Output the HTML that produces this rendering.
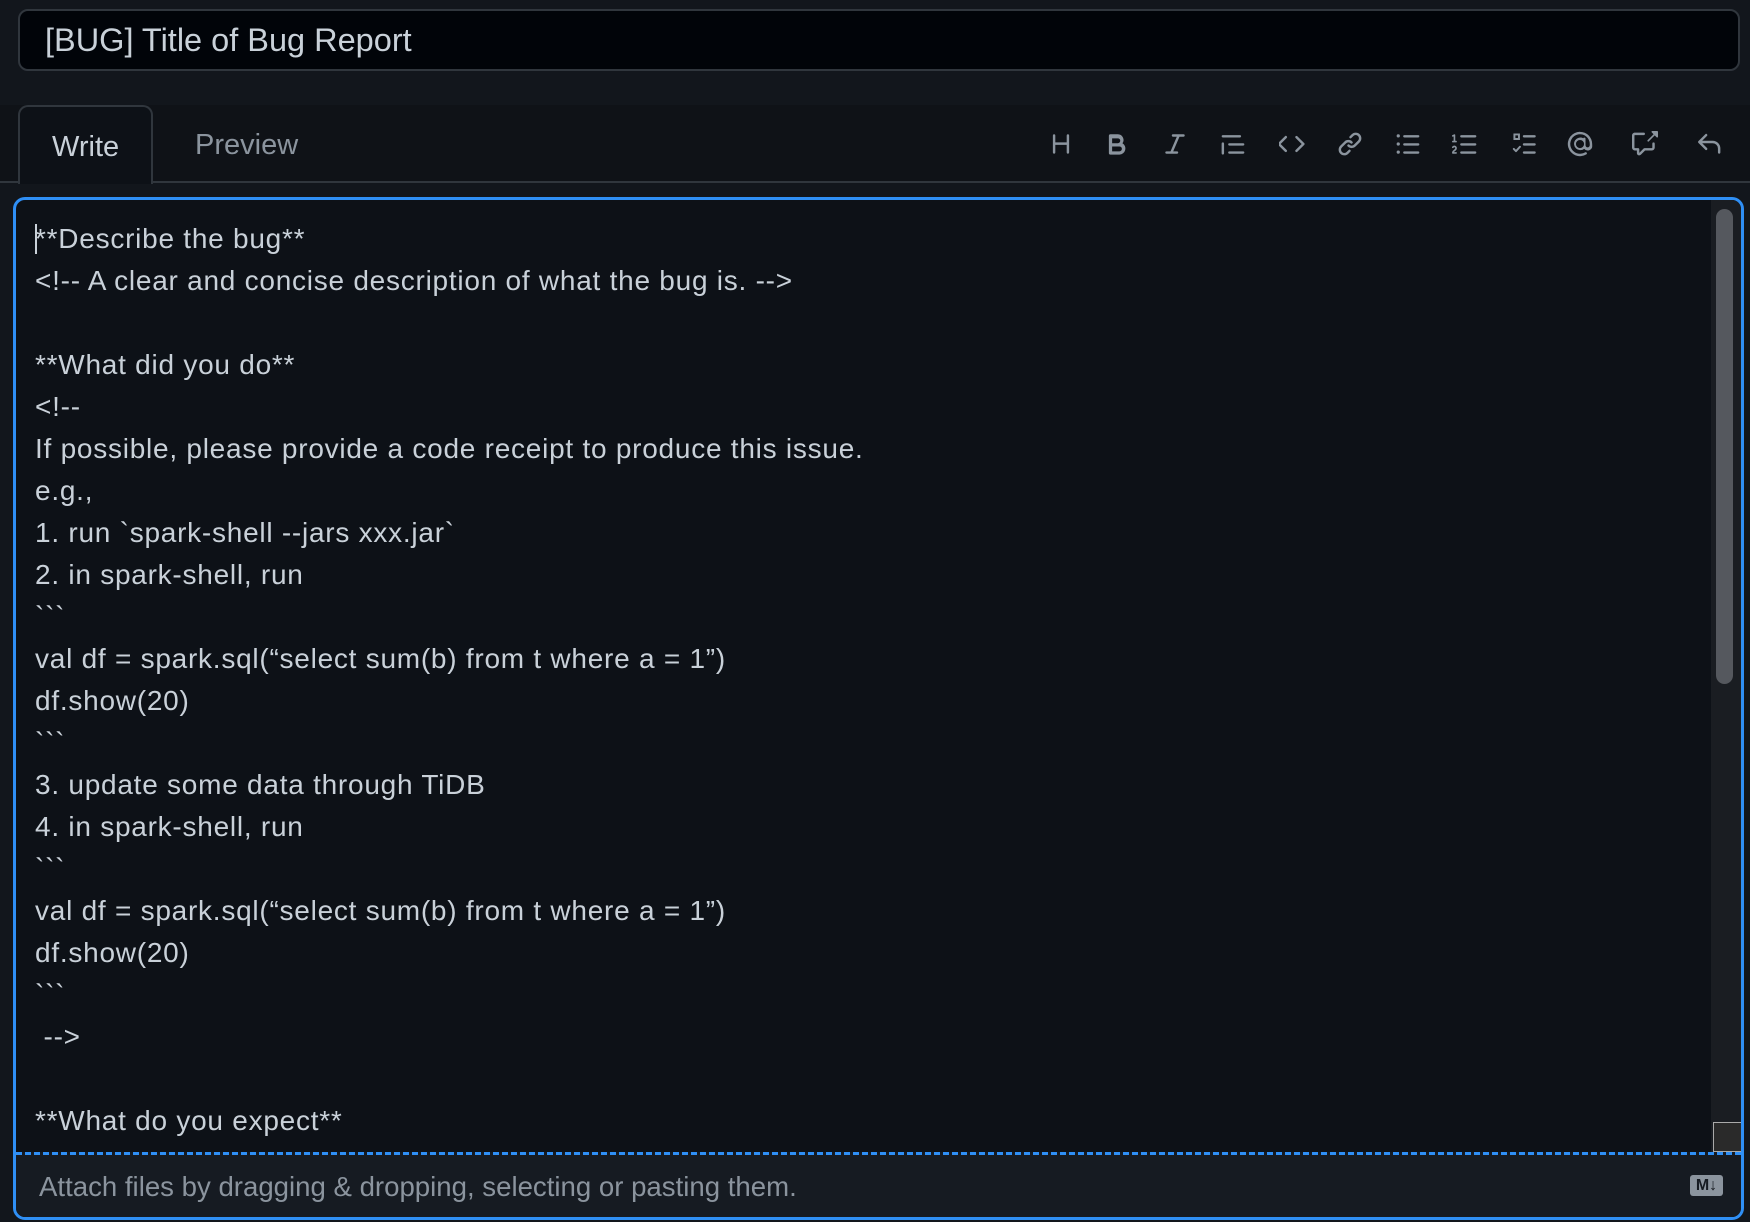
<!DOCTYPE html>
<html><head><meta charset="utf-8"><style>
*{box-sizing:border-box;margin:0;padding:0}
body{width:1750px;height:1222px;background:#12161c;font-family:"Liberation Sans",Arial,sans-serif;position:relative;overflow:hidden;color:#c9d1d9}
.title{position:absolute;left:18px;top:9px;width:1722px;height:62px;background:#010409;border:2px solid #30363d;border-radius:10px;font-size:32.5px;line-height:58px;padding-left:25px;color:#c9d1d9}
.hdr{position:absolute;left:0;top:105px;width:1750px;height:78px;border-bottom:2px solid #30363d;background:#0f1217}
.tab{position:absolute;top:105px;height:79px;font-size:29px;line-height:80px}
.write{left:18px;width:135px;border:2px solid #30363d;border-bottom:none;border-radius:10px 10px 0 0;background:#0d1117;padding-left:32px;color:#c9d1d9}
.prev{left:195px;color:#8b949e}
.ic{position:absolute;top:131px;width:26px;height:26px}
.ic svg{width:26px;height:26px;fill:#8b949e}
.ed{position:absolute;left:13px;top:197px;width:1731px;height:1023px;border:3px solid #2f8ff5;border-radius:12px;background:#0d1117;overflow:hidden}
.txt{position:absolute;left:19px;top:18px;font-size:28px;letter-spacing:0.75px;line-height:42px;white-space:pre;color:#c9d1d9}
.sb{position:absolute;left:1695px;top:0;width:30px;height:952px;background:#1a1d22}
.th{position:absolute;left:1700px;top:9px;width:17px;height:475px;background:#55585e;border-radius:9px}
.rs{position:absolute;left:1697px;top:922px;width:30px;height:30px;background:#2a2a2a;border:1px solid #aaa}
.ft{position:absolute;left:0;top:952px;width:100%;height:75px;background:#161b22;border-top:3px dashed #2f8ff5}
.ft span{position:absolute;left:23px;top:16px;font-size:27.6px;color:#8b949e}
.md{position:absolute;left:1674px;top:20px;width:33px;height:21px;background:#8b949e;border-radius:3px;color:#161b22;font-weight:bold;font-size:16px;line-height:21px;text-align:center}
.caret{position:absolute;left:35px;top:224px;width:2px;height:30px;background:#c9d1d9}
</style></head><body>
<div class="title">[BUG] Title of Bug Report</div>
<div class="hdr"></div>
<div class="tab write">Write</div>
<div class="tab prev">Preview</div>
<div class="ic" style="left:1048px"><svg viewBox="0 0 16 16"><path d="M3.75 2a.75.75 0 0 1 .75.75V7h7V2.75a.75.75 0 0 1 1.5 0v10.5a.75.75 0 0 1-1.5 0V8.5h-7v4.75a.75.75 0 0 1-1.5 0V2.75A.75.75 0 0 1 3.75 2Z"/></svg></div>
<div class="ic" style="left:1104px"><svg viewBox="0 0 16 16"><path d="M4 2h4.5a3.5 3.5 0 0 1 2.850 5.53A3.75 3.75 0 0 1 9.5 14.5H4a1 1 0 0 1-1-1V3a1 1 0 0 1 1-1Zm1 7.5v3h4.5a1.5 1.5 0 0 0 0-3Zm0-2h3.5a1.5 1.5 0 0 0 0-3H5Z"/></svg></div>
<div class="ic" style="left:1162px"><svg viewBox="0 0 16 16"><path d="M6 2.75A.75.75 0 0 1 6.75 2h6.5a.75.75 0 0 1 0 1.5h-2.505l-3.858 9H9.25a.75.75 0 0 1 0 1.5h-6.5a.75.75 0 0 1 0-1.5h2.505l3.858-9H6.75A.75.75 0 0 1 6 2.75Z"/></svg></div>
<div class="ic" style="left:1220px"><svg viewBox="0 0 16 16"><path d="M1.75 2.5h10.5a.75.75 0 0 1 0 1.5H1.75a.75.75 0 0 1 0-1.5Zm4 5h8.5a.75.75 0 0 1 0 1.5h-8.5a.75.75 0 0 1 0-1.5Zm0 5h8.5a.75.75 0 0 1 0 1.5h-8.5a.75.75 0 0 1 0-1.5ZM2.5 7.75v6a.75.75 0 0 1-1.5 0v-6a.75.75 0 0 1 1.5 0Z"/></svg></div>
<div class="ic" style="left:1279px"><svg viewBox="0 0 16 16"><path d="m11.28 3.22 4.25 4.25a.75.75 0 0 1 0 1.06l-4.25 4.25a.75.75 0 0 1-1.06-1.06L13.94 8l-3.72-3.72a.75.75 0 0 1 1.06-1.06Zm-6.56 0a.75.75 0 0 1 0 1.06L1 8l3.72 3.72a.75.75 0 0 1-1.06 1.06L-.59 8.53a.75.75 0 0 1 0-1.06l4.25-4.25a.75.75 0 0 1 1.06 0Z"/></svg></div>
<div class="ic" style="left:1337px"><svg viewBox="0 0 16 16"><path d="m7.775 3.275 1.25-1.25a3.5 3.5 0 1 1 4.95 4.95l-2.5 2.5a3.5 3.5 0 0 1-4.95 0 .751.751 0 0 1 1.06-1.06 2 2 0 0 0 2.83 0l2.5-2.5a2 2 0 0 0-2.83-2.83l-1.25 1.25a.75.75 0 0 1-1.06-1.06Zm-4.69 9.64a2 2 0 0 0 2.83 0l1.25-1.25a.75.75 0 0 1 1.06 1.06l-1.25 1.25a3.5 3.5 0 1 1-4.950-4.95l2.5-2.5a3.5 3.5 0 0 1 4.95 0 .75.75 0 0 1-1.06 1.06 2 2 0 0 0-2.83 0l-2.5 2.5a2 2 0 0 0 0 2.83Z"/></svg></div>
<div class="ic" style="left:1395px"><svg viewBox="0 0 16 16"><path d="M5.75 2.5h8.5a.75.75 0 0 1 0 1.5h-8.5a.75.75 0 0 1 0-1.5Zm0 5h8.5a.75.75 0 0 1 0 1.5h-8.5a.75.75 0 0 1 0-1.5Zm0 5h8.5a.75.75 0 0 1 0 1.5h-8.5a.75.75 0 0 1 0-1.5ZM2 14a1 1 0 1 1 0-2 1 1 0 0 1 0 2Zm1-6a1 1 0 1 1-2 0 1 1 0 0 1 2 0ZM2 4a1 1 0 1 1 0-2 1 1 0 0 1 0 2Z"/></svg></div>
<div class="ic" style="left:1452px"><svg viewBox="0 0 16 16"><path d="M5 3.25a.75.75 0 0 1 .75-.75h8.5a.75.75 0 0 1 0 1.5h-8.5A.75.75 0 0 1 5 3.25Zm0 5a.75.75 0 0 1 .75-.75h8.5a.75.75 0 0 1 0 1.5h-8.5A.75.75 0 0 1 5 8.25Zm0 5a.75.75 0 0 1 .75-.75h8.5a.75.75 0 0 1 0 1.5h-8.5a.75.75 0 0 1-.75-.75ZM.924 10.32a.5.5 0 0 1-.851-.525c.097-.144.215-.273.348-.384.228-.19.588-.392 1.068-.392.468 0 .858.181 1.126.484.259.294.377.673.377 1.038 0 .987-.686 1.495-1.156 1.845-.303.225-.522.4-.654.597h1.357a.5.5 0 0 1 0 1H.5a.5.5 0 0 1-.5-.5c0-1.005.692-1.52 1.167-1.875.531-.396.8-.625.8-1.078a.57.57 0 0 0-.128-.376C1.806 10.068 1.695 10 1.5 10a.658.658 0 0 0-.429.163.835.835 0 0 0-.144.153ZM2.003 2.5V6h.503a.5.5 0 0 1 0 1H.5a.5.5 0 0 1 0-1h.503V3.308l-.28.14a.5.5 0 0 1-.446-.895l1.003-.5a.5.5 0 0 1 .723.447Z"/></svg></div>
<div class="ic" style="left:1511px"><svg viewBox="0 0 16 16"><path d="M1.5 1.5h4v4h-4Zm1.2 1.2v1.6h1.6V2.7ZM8 2.5h6.5a.75.75 0 0 1 0 1.5H8a.75.75 0 0 1 0-1.5Zm0 5h6.5a.75.75 0 0 1 0 1.5H8a.75.75 0 0 1 0-1.5Zm0 5h6.5a.75.75 0 0 1 0 1.5H8a.75.75 0 0 1 0-1.5ZM1.3 10.6a.6.6 0 0 1 .85 0l.9.9 2-2.2a.6.6 0 0 1 .9.8l-2.4 2.7a.6.6 0 0 1-.88.02l-1.37-1.37a.6.6 0 0 1 0-.85Z"/></svg></div>
<div class="ic" style="left:1567px"><svg viewBox="0 0 16 16"><path d="M8 0.5a7.5 7.5 0 1 0 3.9 13.9.75.75 0 0 0-.78-1.28A6 6 0 1 1 14 8v.8a1.3 1.3 0 0 1-2.6 0V4.8a.75.75 0 0 0-1.4-.37A3.9 3.9 0 1 0 10.6 11a2.8 2.8 0 0 0 4.9-2.2V8A7.5 7.5 0 0 0 8 .5Zm0 5a2.5 2.5 0 1 1 0 5 2.5 2.5 0 0 1 0-5Z"/></svg></div>
<div class="ic" style="left:1632px"><svg viewBox="0 0 16 16"><path d="M1.75 1h5.5a.75.75 0 0 1 0 1.5h-5.5a.25.25 0 0 0-.25.25v7.5c0 .138.112.25.25.25h2a.75.75 0 0 1 .75.75v2.19l2.72-2.72a.749.749 0 0 1 .53-.22h4.5a.25.25 0 0 0 .25-.25v-2.5a.75.75 0 0 1 1.5 0v2.5A1.75 1.75 0 0 1 12.25 12H8.06l-2.573 2.573A1.458 1.458 0 0 1 3 13.543V12H1.75A1.75 1.75 0 0 1 0 10.25v-7.5C0 1.784.784 1 1.75 1ZM12.5 0h3a.5.5 0 0 1 .5.5v3a.5.5 0 0 1-.854.354L14 2.707 10.354 6.354a.5.5 0 1 1-.708-.708L13.293 2l-1.147-1.146A.5.5 0 0 1 12.5 0Z"/></svg></div>
<div class="ic" style="left:1696px"><svg viewBox="0 0 16 16"><path d="M6.780 1.97a.75.75 0 0 1 0 1.06L3.81 6h6.44A4.75 4.75 0 0 1 15 10.75v2.5a.75.75 0 0 1-1.5 0v-2.5a3.25 3.25 0 0 0-3.25-3.25H3.81l2.97 2.97a.749.749 0 0 1-1.06 1.060L1.47 7.28a.75.75 0 0 1 0-1.06l4.25-4.25a.75.75 0 0 1 1.06 0Z"/></svg></div>
<div class="ed">
<div class="txt">**Describe the bug**
&lt;!-- A clear and concise description of what the bug is. --&gt;

**What did you do**
&lt;!--
If possible, please provide a code receipt to produce this issue.
e.g.,
1. run &#96;spark-shell --jars xxx.jar&#96;
2. in spark-shell, run
&#96;&#96;&#96;
val df = spark.sql(“select sum(b) from t where a = 1”)
df.show(20)
&#96;&#96;&#96;
3. update some data through TiDB
4. in spark-shell, run
&#96;&#96;&#96;
val df = spark.sql(“select sum(b) from t where a = 1”)
df.show(20)
&#96;&#96;&#96;
 --&gt;

**What do you expect**</div>
<div class="sb"></div><div class="th"></div><div class="rs"></div>
<div class="ft"><span>Attach files by dragging &amp; dropping, selecting or pasting them.</span><div class="md">M↓</div></div>
</div>
<div class="caret"></div>
</body></html>
